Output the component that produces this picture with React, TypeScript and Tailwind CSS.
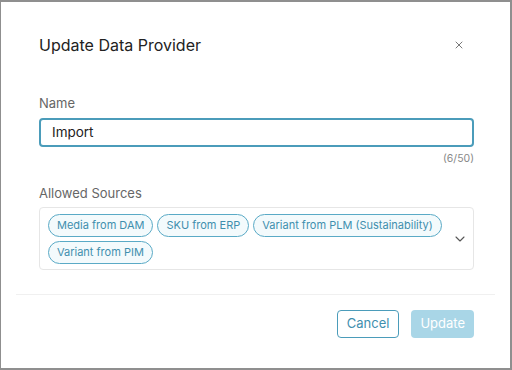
import { X, ChevronDown } from 'lucide-react'

const SOURCES = ['Media from DAM', 'SKU from ERP', 'Variant from PLM (Sustainability)', 'Variant from PIM']

export default function App() {
  return (
    <div className="h-[370px] w-[512px] bg-[#8f8f8f] pt-[2px] pl-px pr-[2px] pb-[2px]" style={{ fontFamily: 'Inter, "Noto Sans", sans-serif' }}>
      <div className="flex h-full flex-col bg-white">
        {/* Header */}
        <div className="flex items-center justify-between pl-[38px] pr-[45px] pt-[32px]">
          <h2 className="text-[16px] font-normal leading-[22px] text-[#222]">Update Data Provider</h2>
          <X className="h-[12px] w-[12px] text-[#555]" strokeWidth={1.6} />
        </div>

        {/* Body */}
        <div className="flex flex-col pl-[38px] pr-[36px] pt-[39px]">
          <label className="text-[13px] leading-[16px] text-[#666]">Name</label>
          <div className="mt-[7px] flex h-[29px] items-center rounded-[4px] border-2 border-[#4b9cba] px-[11px] text-[13.5px] text-[#222]">
            Import
          </div>
          <div className="mt-[5px] self-end text-[10.5px] leading-[14px] text-[#888]">(6/50)</div>

          <label className="mt-[19px] text-[13px] leading-[16px] text-[#666]">Allowed Sources</label>
          <div className="mt-[6px] flex h-[63px] items-center rounded-[4px] border border-[#e6e6e6] pl-[8px] pr-[5px]">
            <div className="flex flex-1 flex-wrap gap-x-[4px] gap-y-[4px]">
              {SOURCES.map((s) => (
                <span
                  key={s}
                  className="rounded-full border border-[#5aaac6] bg-[#f3fafc] px-[8px] py-[3px] text-[11px] leading-[15px] text-[#3f8fae]"
                >
                  {s}
                </span>
              ))}
            </div>
            <ChevronDown className="h-[16px] w-[16px] text-[#555]" strokeWidth={1.6} />
          </div>
        </div>

        {/* Footer */}
        <div className="mx-[15px] mt-[24px] border-t border-[#f0f0f0]" />
        <div className="flex justify-end gap-[12px] pl-[38px] pr-[36px] pt-[15px]">
          <button className="h-[28px] rounded-[4px] border border-[#4b9cba] px-[9px] text-[13px] text-[#3f8fae]">Cancel</button>
          <button className="h-[28px] rounded-[4px] bg-[#a9d6e7] px-[9px] text-[13px] text-white">Update</button>
        </div>
      </div>
    </div>
  )
}
